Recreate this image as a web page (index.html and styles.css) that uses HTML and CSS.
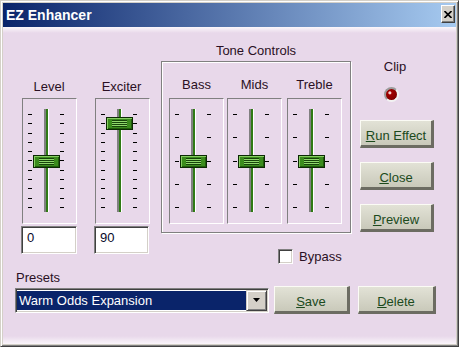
FILE: index.html
```html
<!DOCTYPE html>
<html>
<head>
    <title>EZ Enhancer</title>
    <meta charset="UTF-8">
    <link rel="stylesheet" href="styles.css">
</head>
<body>
    <div class="window">
        <div class="titlebar">
            <span class="title">EZ Enhancer</span>
            <button class="close">
                <svg width="8" height="7" viewBox="0 0 8 7"><path d="M0.5 0 L7.5 7 M7.5 0 L0.5 7" stroke="#000" stroke-width="1.6"/></svg>
            </button>
        </div>
        <div class="client">
            <div class="top">
                <div class="slider-col level">
                    <div class="slider-label">Level</div>
                    <div class="slider">
                        <div class="ticks"><i></i><i></i><i></i><i></i><i></i><i></i><i></i><i></i><i></i><i></i><i></i></div>
                        <div class="track"></div>
                        <div class="ticks"><i></i><i></i><i></i><i></i><i></i><i></i><i></i><i></i><i></i><i></i><i></i></div>
                        <div class="thumb" style="top: 56px"><span class="grip"></span></div>
                    </div>
                    <div class="value">0</div>
                </div>
                <div class="slider-col exciter">
                    <div class="slider-label">Exciter</div>
                    <div class="slider">
                        <div class="ticks"><i></i><i></i><i></i><i></i><i></i><i></i><i></i><i></i><i></i><i></i><i></i></div>
                        <div class="track"></div>
                        <div class="ticks"><i></i><i></i><i></i><i></i><i></i><i></i><i></i><i></i><i></i><i></i><i></i></div>
                        <div class="thumb" style="top: 18px"><span class="grip"></span></div>
                    </div>
                    <div class="value">90</div>
                </div>
                <div class="tone">
                    <div class="tone-title">Tone Controls</div>
                    <div class="group">
                        <div class="tone-col">
                            <div class="slider-label">Bass</div>
                            <div class="slider">
                                <div class="ticks"><i></i><i></i><i></i><i></i><i></i></div>
                                <div class="track"></div>
                                <div class="ticks"><i></i><i></i><i></i><i></i><i></i></div>
                                <div class="thumb" style="top: 56px"><span class="grip"></span></div>
                            </div>
                        </div>
                        <div class="tone-col mids">
                            <div class="slider-label">Mids</div>
                            <div class="slider">
                                <div class="ticks"><i></i><i></i><i></i><i></i><i></i></div>
                                <div class="track"></div>
                                <div class="ticks"><i></i><i></i><i></i><i></i><i></i></div>
                                <div class="thumb" style="top: 56px"><span class="grip"></span></div>
                            </div>
                        </div>
                        <div class="tone-col treble">
                            <div class="slider-label">Treble</div>
                            <div class="slider">
                                <div class="ticks"><i></i><i></i><i></i><i></i><i></i></div>
                                <div class="track"></div>
                                <div class="ticks"><i></i><i></i><i></i><i></i><i></i></div>
                                <div class="thumb" style="top: 56px"><span class="grip"></span></div>
                            </div>
                        </div>
                    </div>
                    <label class="bypass">
                        <span class="checkbox"></span>
                        <span>Bypass</span>
                    </label>
                </div>
                <div class="side">
                    <div class="clip-label">Clip</div>
                    <div class="led"></div>
                    <button class="btn run"><u>R</u>un Effect</button>
                    <button class="btn"><u>C</u>lose</button>
                    <button class="btn"><u>P</u>review</button>
                </div>
            </div>
            <div class="presets-label">Presets</div>
            <div class="presets">
                <div class="combo">
                    <div class="combo-value">Warm Odds Expansion</div>
                    <div class="combo-btn">
                        <svg width="7" height="4" viewBox="0 0 7 4"><path d="M0 0 H7 L3.5 4 Z" fill="#000"/></svg>
                    </div>
                </div>
                <button class="btn save"><u>S</u>ave</button>
                <button class="btn delete"><u>D</u>elete</button>
            </div>
        </div>
    </div>
</body>
</html>
```

FILE: styles.css
```css
body {
    margin: 0;
    background: #d4d0c8;
    font-family: "Liberation Sans", Arial, sans-serif;
    font-size: 13px;
    color: #2a1024;
}
.window {
    width: 459px;
    height: 347px;
    box-sizing: border-box;
    border: 1px solid;
    border-color: #d4d0c8 #404040 #404040 #d4d0c8;
    box-shadow: inset 1px 1px #fff, inset -1px -1px #808080;
    padding: 2px;
    background: #d4d0c8;
    display: flex;
    flex-direction: column;
}
.titlebar {
    display: flex;
    height: 24px;
    background: linear-gradient(to right, #0a246a, #a6caf0);
}
.title {
    color: #fff;
    font-weight: 700;
    font-size: 14px;
    line-height: 24px;
    padding-left: 3px;
}
.close {
    margin: 2px 1px 0 auto;
    width: 14px;
    height: 18px;
    padding: 0;
    border: 1px solid;
    border-color: #fff #404040 #404040 #fff;
    box-shadow: inset -1px -1px #808080;
    background: #d4d0c8;
    display: flex;
    align-items: center;
    justify-content: center;
}
.client {
    flex: 1;
    background: linear-gradient(to bottom, #fbf7fb 0, #e8d8ea 6px, #e8d8ea calc(100% - 8px), #faf5fa 100%);
}
.top {
    display: flex;
    align-items: flex-start;
}
.slider-label {
    line-height: 16px;
    text-align: center;
}
.slider-col {
    width: 56px;
    margin-top: 52px;
}
.level {
    margin-left: 18px;
}
.exciter {
    margin-left: 17px;
    width: 55px;
}
.slider-col .slider {
    margin: 3px 0 0 1px;
}
.slider {
    position: relative;
    display: flex;
    width: 55px;
    height: 126px;
    box-sizing: border-box;
    border: 1px solid;
    border-color: #808080 #fff #fff #808080;
    padding: 15px 0 0 5px;
}
.ticks {
    display: flex;
    flex-direction: column;
    justify-content: space-between;
    width: 4px;
    height: 94px;
}
.ticks i {
    display: block;
    height: 1px;
    background: #000;
}
.track {
    width: 5px;
    height: 103px;
    box-sizing: border-box;
    margin: -5px 11px 0 12px;
    border-left: 2px solid #808080;
    border-right: 1px solid #fff;
    background: #2f7a14;
}
.thumb {
    position: absolute;
    left: 10px;
    width: 27px;
    height: 13px;
    box-sizing: border-box;
    border: 1px solid #0c2a04;
    background: #3b8c1d;
    box-shadow: inset 1px 1px #86cc62, inset -1px -1px #205c0c;
    padding: 2px 0 0 5px;
}
.grip {
    display: block;
    width: 15px;
    height: 7px;
    background: repeating-linear-gradient(to bottom, #17440a 0 1px, #8fd86c 1px 2px);
}
.value {
    margin-top: 2px;
    height: 28px;
    box-sizing: border-box;
    border: 1px solid;
    border-color: #808080 #fff #fff #808080;
    box-shadow: inset 1px 1px #404040, inset -1px -1px #d4d0c8;
    background: #fff;
    padding: 3px 5px;
    line-height: 16px;
    color: #08082a;
}
.tone {
    margin: 16px 0 0 12px;
    width: 191px;
}
.tone-title {
    width: 190px;
    line-height: 16px;
    text-align: center;
}
.group {
    display: flex;
    margin-top: 2px;
    width: 190px;
    height: 172px;
    box-sizing: border-box;
    border: 1px solid #808080;
    box-shadow: inset 1px 1px #fff, 1px 1px #fff;
    padding: 15px 0 0 7px;
}
.tone-col {
    width: 55px;
}
.tone-col .slider {
    margin-top: 5px;
}
.mids {
    margin-left: 3px;
}
.treble {
    margin-left: 5px;
}
.bypass {
    display: flex;
    align-items: center;
    gap: 6px;
    margin: 16px 0 0 117px;
    line-height: 15px;
}
.checkbox {
    width: 15px;
    height: 15px;
    box-sizing: border-box;
    border: 1px solid;
    border-color: #808080 #fff #fff #808080;
    box-shadow: inset 1px 1px #404040, inset -1px -1px #d4d0c8;
    background: #fff;
}
.side {
    display: flex;
    flex-direction: column;
    align-items: flex-start;
    margin-top: 32px;
    padding-left: 8px;
}
.clip-label {
    width: 70px;
    padding-right: 4px;
    line-height: 16px;
    text-align: center;
}
.led {
    margin: 12px 0 0 24px;
    width: 15px;
    height: 15px;
    box-sizing: border-box;
    border-radius: 50%;
    border: 2px solid;
    border-color: #9c9c9c #f2f2f2 #f2f2f2 #9c9c9c;
    background: radial-gradient(circle at 35% 35%, #f4d0d0 0 1px, #a00000 2px, #700000 100%);
}
.btn {
    width: 74px;
    height: 28px;
    box-sizing: border-box;
    margin-top: 14px;
    padding: 5px 0 0;
    border-style: solid;
    border-width: 1px 3px 3px 1px;
    border-color: #fbfbf5 #6c6c62 #6c6c62 #fbfbf5;
    background: linear-gradient(to bottom, #e2e2d6, #c9c9ba);
    font-family: "Liberation Sans", Arial, sans-serif;
    font-size: 13px;
    line-height: 16px;
    color: #1c4a1c;
    text-align: center;
    vertical-align: top;
}
.run {
    margin-top: 18px;
}
.presets-label {
    margin: 6px 0 0 13px;
    line-height: 16px;
}
.presets {
    display: flex;
    align-items: center;
    margin-left: 12px;
}
.combo {
    display: flex;
    width: 254px;
    height: 25px;
    box-sizing: border-box;
    border: 1px solid;
    border-color: #808080 #fff #fff #808080;
    box-shadow: inset 1px 1px #404040, inset -1px -1px #d4d0c8;
    padding: 1px;
    background: #fff;
}
.combo-value {
    flex: 1;
    margin: 1px 0;
    padding-left: 2px;
    background: #0a246a;
    color: #fff;
    line-height: 19px;
}
.combo-btn {
    width: 21px;
    height: 21px;
    box-sizing: border-box;
    border: 1px solid;
    border-color: #d4d0c8 #404040 #404040 #d4d0c8;
    box-shadow: inset 1px 1px #fff, inset -1px -1px #808080;
    background: #d4d0c8;
    display: flex;
    align-items: center;
    justify-content: center;
}
.presets .btn {
    margin-top: 0;
}
.save {
    margin-left: 5px;
    width: 76px;
}
.delete {
    margin-left: 8px;
    width: 78px;
}
```
